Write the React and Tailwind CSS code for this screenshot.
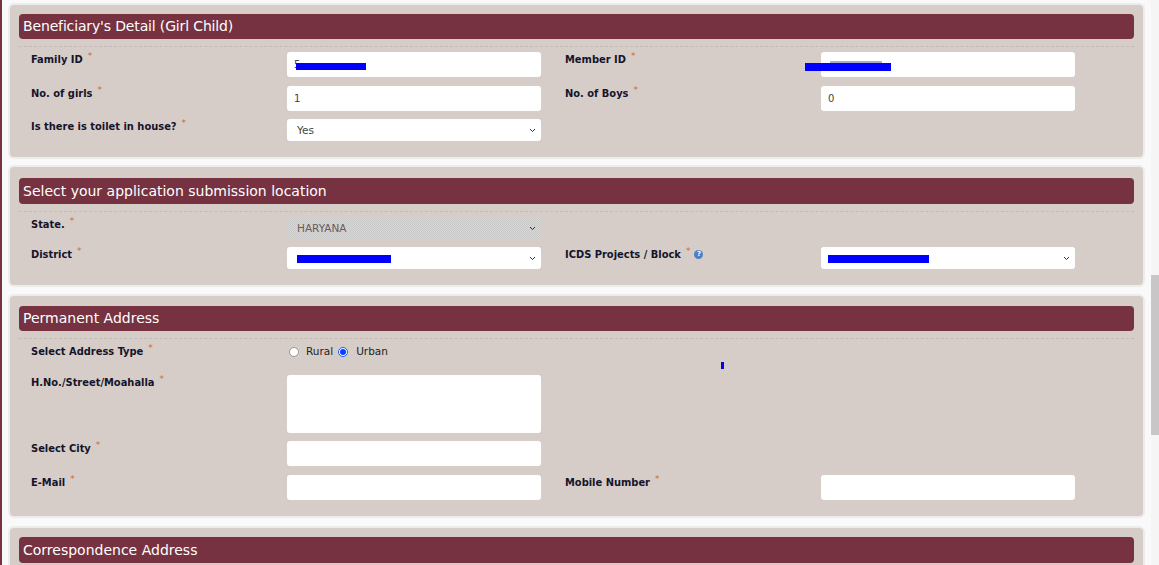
import React from 'react'

function Star() {
  return <span className="ml-[5px] align-[4px] font-['DejaVu_Sans'] text-[9px] font-normal leading-none text-[#d2691e]">*</span>
}

function Label({ children, className = 'w-[268px] pl-[12px]' }) {
  return (
    <div className={`font-['DejaVu_Sans_Condensed','DejaVu_Sans',sans-serif] text-[11px] font-bold leading-[14px] text-[#14142b] ${className}`}>
      {children}
    </div>
  )
}

function RightLabel({ text, children }) {
  return (
    <Label className="ml-[24px] flex w-[256px] items-start">
      <span>{text}<Star /></span>
      {children}
    </Label>
  )
}

function Input({ children, className = 'h-[25px]' }) {
  return (
    <div className={`flex w-[254px] items-center rounded-[3px] bg-white pl-[7px] text-[10px] text-[#444] ${className}`}>
      {children}
    </div>
  )
}

function Select({ children, disabled = false }) {
  const bg = disabled
    ? 'bg-[repeating-conic-gradient(#dadada_0_25%,#c6c6c6_0_50%)] bg-[length:2px_2px] text-[#6b5a55]'
    : 'bg-white text-[#444]'
  return (
    <div className={`flex h-[22px] w-[254px] items-center rounded-[3px] pl-[10px] text-[10.5px] ${bg}`}>
      <span className="flex pt-[1px]">{children}</span>
      <svg className="ml-auto mr-[5px]" width="7" height="5" viewBox="0 0 7 5" fill="none" stroke="#334" strokeWidth="1">
        <path d="M1 1l2.5 2.5L6 1" />
      </svg>
    </div>
  )
}

function Redact({ className }) {
  return <div className={`bg-[#0000ff] ${className}`} />
}

function Card({ title, className, headClass = 'h-[25px]', children }) {
  return (
    <section className={`rounded-[4px] bg-[#d6cdc8] px-[9px] shadow-[0_0_0_2px_#ececec] ${className}`}>
      <h2 className={`flex items-center rounded-[4px] bg-[#763241] pl-[4px] text-[14px] font-normal text-white ${headClass}`}>
        {title}
      </h2>
      <div className="mt-[7px] border-t border-dashed border-[#c4bbb6]" />
      {children}
    </section>
  )
}

function Row({ className = '', children }) {
  return <div className={`flex ${className}`}>{children}</div>
}

export default function App() {
  return (
    <div className="relative h-[565px] overflow-hidden bg-[#f9f9f9] font-['DejaVu_Sans',sans-serif]">
      <div className="absolute left-0 top-0 h-full w-[2px] bg-[#763241]" />

      <div className="absolute right-0 top-0 h-full w-[8px] bg-[#f5f5f5]">
        <div className="mt-[275px] h-[160px] bg-[#c8c6c6]" />
      </div>

      <main className="ml-[10px] w-[1133px] pt-[5px]">
        <Card title="Beneficiary's Detail (Girl Child)" className="h-[152px] pt-[9px] tracking-[-0.15px]">
          <Row className="mt-[5px] tracking-normal">
            <Label>Family ID<Star /></Label>
            <Input>
              5
              <Redact className="-ml-[4px] mt-[3px] h-[7px] w-[70px]" />
            </Input>
            <RightLabel text="Member ID" />
            <Input>
              <div className="relative -ml-[23px] mt-[5px] h-[8px] w-[86px] bg-[#0000ff]">
                <div className="absolute -top-[2px] left-[25px] h-[2px] w-[52px] bg-[#a9adc4]" />
              </div>
            </Input>
          </Row>
          <Row className="mt-[9px] tracking-normal">
            <Label>No. of girls<Star /></Label>
            <Input>1</Input>
            <RightLabel text="No. of Boys" />
            <Input>0</Input>
          </Row>
          <Row className="mt-[8px] tracking-normal">
            <Label>Is there is toilet in house?<Star /></Label>
            <Select>Yes</Select>
          </Row>
        </Card>

        <Card title="Select your application submission location" headClass="h-[26px]" className="mt-[10px] h-[118px] pt-[11px]">
          <Row className="mt-[5px]">
            <Label>State.<Star /></Label>
            <Select disabled>HARYANA</Select>
          </Row>
          <Row className="mt-[8px]">
            <Label>District<Star /></Label>
            <Select><Redact className="h-[8px] w-[94px]" /></Select>
            <RightLabel text="ICDS Projects / Block">
              <span className="ml-[4px] mt-[3px] flex h-[9px] w-[9px] items-center justify-center rounded-full bg-[#4f7fc4] font-['DejaVu_Sans'] text-[7px] leading-none text-white">?</span>
            </RightLabel>
            <Select><Redact className="-ml-[3px] h-[8px] w-[101px]" /></Select>
          </Row>
        </Card>

        <Card title="Permanent Address" className="mt-[11px] h-[220px] pt-[10px]">
          <Row className="mt-[5px] h-[31px]">
            <Label>Select Address Type<Star /></Label>
            <div className="flex h-[16px] items-center pl-[2px] text-[10.5px] text-[#222]">
              <span className="h-[10px] w-[10px] rounded-full border border-[#999] bg-white" />
              <span className="ml-[7px]">Rural</span>
              <span className="ml-[5px] flex h-[10px] w-[10px] items-center justify-center rounded-full border border-[#0a5fff] bg-white">
                <span className="h-[6px] w-[6px] rounded-full bg-[#0a3fff]" />
              </span>
              <span className="ml-[8px]">Urban</span>
            </div>
            <Redact className="ml-[333px] mt-[18px] h-[7px] w-[3px]" />
          </Row>
          <Row>
            <Label>H.No./Street/Moahalla<Star /></Label>
            <Input className="h-[58px]" />
          </Row>
          <Row className="mt-[8px]">
            <Label>Select City<Star /></Label>
            <Input />
          </Row>
          <Row className="mt-[9px]">
            <Label>E-Mail<Star /></Label>
            <Input />
            <RightLabel text="Mobile Number" />
            <Input />
          </Row>
        </Card>

        <Card title="Correspondence Address" headClass="h-[26px]" className="mt-[12px] h-[60px] pt-[9px]" />
      </main>
    </div>
  )
}
